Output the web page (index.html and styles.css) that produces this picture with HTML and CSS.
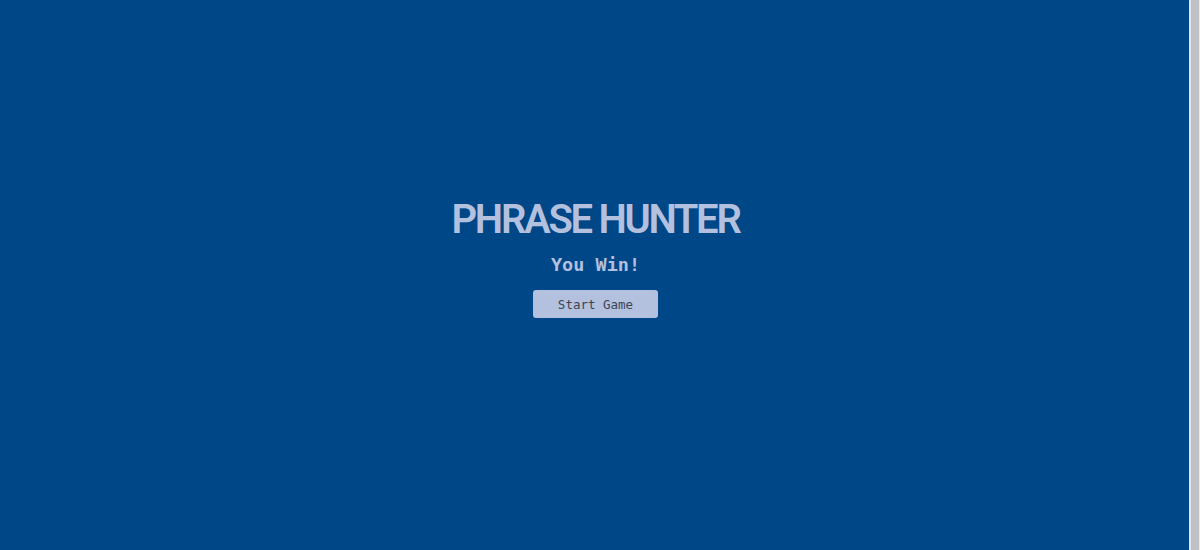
FILE: index.html
```html
<!DOCTYPE html>
<html>
<head>
<meta charset="utf-8">
<title>Phrase Hunter</title>
<link rel="stylesheet" href="styles.css">
</head>
<body>
<div class="page">
  <div id="overlay" class="main win">
    <h2 class="title">PHRASE HUNTER</h2>
    <h1 id="game-over-message">You Win!</h1>
    <button id="btn__reset">Start Game</button>
  </div>
  <div class="scroll-bar"></div>
</div>
</body>
</html>
```

FILE: styles.css
```css
html, body {
  margin: 0;
  padding: 0;
  height: 100%;
}
body {
  background-color: #004788;
  font-family: "DejaVu Sans Mono", monospace;
}
.page {
  display: flex;
  height: 100%;
}
.main {
  flex: 1;
  display: flex;
  flex-direction: column;
  align-items: center;
  justify-content: center;
  padding-bottom: 32px;
  padding-left: 2px;
  box-sizing: border-box;
}
.title {
  margin: 0;
  font-family: Roboto, sans-serif;
  font-weight: 600;
  font-size: 40px;
  letter-spacing: -2.3px;
  color: #b3c0de;
  line-height: 1;
}
#game-over-message {
  margin: 14px 0 0 0;
  font-size: 18.5px;
  font-weight: 700;
  color: #b3c0de;
  line-height: 1.2;
}
#btn__reset {
  margin-top: 14px;
  width: 125px;
  height: 28px;
  border: none;
  border-radius: 3px;
  background-color: #b3c0de;
  color: #3a4656;
  font-family: "DejaVu Sans Mono", monospace;
  font-size: 12.5px;
  padding: 0;
}
.scroll-bar {
  width: 8px;
  border-left: 2px solid #dfe3ea;
  background-color: #c1c1c3;
  border-right: 1px solid #e9e9e9;
}
```
